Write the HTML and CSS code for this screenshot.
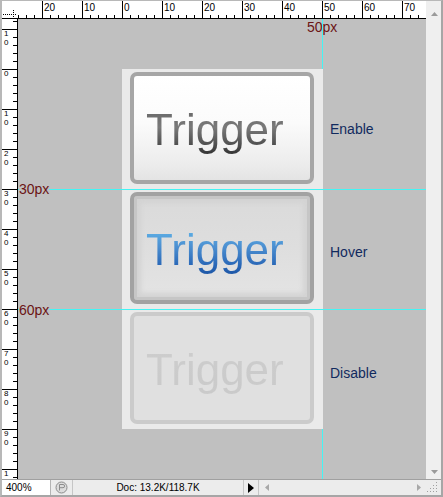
FILE: index.html
```html
<!DOCTYPE html>
<html>
<head>
<meta charset="utf-8">
<title>Sprite</title>
<link rel="stylesheet" href="styles.css">
</head>
<body>
<div class="win">
  <div class="corner">
    <svg width="16" height="17" viewBox="0 0 16 17"><path d="M1 13.5H15M11.5 9V17" stroke="#000" stroke-width="1" stroke-dasharray="1 1" fill="none"/></svg>
  </div>
  <div class="hruler">
    <span>20</span><span>10</span><span>0</span><span>10</span><span>20</span><span>30</span><span>40</span><span>50</span><span>60</span><span>70</span>
  </div>
  <div class="vscroll">
    <svg width="7" height="4" viewBox="0 0 7 4"><polygon points="0,4 7,4 3.5,0" fill="#9a9a9a"/></svg>
    <svg width="7" height="4" viewBox="0 0 7 4"><polygon points="0,0 7,0 3.5,4" fill="#9a9a9a"/></svg>
  </div>
  <div class="vruler">
    <span>1<br>0</span><span>0</span><span>1<br>0</span><span>2<br>0</span><span>3<br>0</span><span>4<br>0</span><span>5<br>0</span><span>6<br>0</span><span>7<br>0</span><span>8<br>0</span><span>9<br>0</span><span>1</span>
  </div>
  <div class="canvas">
    <span class="gl gl-50">50px</span>
    <div class="guide guide-v"></div>
    <div class="stage">
      <div class="sprite">
        <div class="cell"><div class="btn btn-enable"><span class="txt">Trigger</span></div></div>
        <div class="cell"><div class="btn btn-hover"><span class="txt">Trigger</span></div></div>
        <div class="cell"><div class="btn btn-disable"><span class="txt">Trigger</span></div></div>
      </div>
      <div class="states">
        <div class="state s-enable">Enable</div>
        <div class="state s-hover">Hover</div>
        <div class="state s-disable">Disable</div>
      </div>
    </div>
    <div class="guide guide-h g-30"></div>
    <div class="guide guide-h g-60"></div>
    <span class="gl gl-30">30px</span>
    <span class="gl gl-60">60px</span>
  </div>
  <div class="status">
    <div class="zoomf">400%</div>
    <div class="sicon">
      <svg width="13" height="13" viewBox="0 0 13 13"><circle cx="6.5" cy="6.5" r="5.5" fill="#dcdcdc" stroke="#8c8c8c"/><path d="M4.5 9.5V3.5H8a1.6 1.6 0 0 1 0 3.2H4.5" fill="none" stroke="#8c8c8c"/></svg>
    </div>
    <div class="doc">Doc: 13.2K/118.7K</div>
    <div class="play">
      <svg width="6" height="10" viewBox="0 0 6 10"><polygon points="0,0 6,5 0,10" fill="#000"/></svg>
    </div>
    <div class="hscroll">
      <svg width="4" height="7" viewBox="0 0 4 7"><polygon points="4,0 4,7 0,3.5" fill="#a8a8a8"/></svg>
      <svg width="4" height="7" viewBox="0 0 4 7"><polygon points="0,0 0,7 4,3.5" fill="#a8a8a8"/></svg>
    </div>
    <div class="grip">
      <svg width="12" height="11" viewBox="0 0 12 11" fill="#a0a0a0">
        <rect x="9" y="0" width="1" height="1"/><rect x="9" y="3" width="1" height="1"/><rect x="6" y="3" width="1" height="1"/>
        <rect x="9" y="6" width="1" height="1"/><rect x="6" y="6" width="1" height="1"/><rect x="3" y="6" width="1" height="1"/>
        <rect x="9" y="9" width="1" height="1"/><rect x="6" y="9" width="1" height="1"/><rect x="3" y="9" width="1" height="1"/><rect x="0" y="9" width="1" height="1"/>
      </svg>
    </div>
  </div>
</div>
</body>
</html>
```

FILE: styles.css
```css
* { box-sizing: border-box; margin: 0; padding: 0; }
html, body { width: 443px; height: 497px; overflow: hidden; }
body { background: #d6d6d6; font-family: "Liberation Sans", Arial, sans-serif; }

.win {
  width: 443px;
  height: 497px;
  display: grid;
  grid-template-columns: 16px 408px 15px;
  grid-template-rows: 18px 460px 16px;
  border-style: solid;
  border-color: #b8b8b8 #a6a6a6 #a6a6a6 #b8b8b8;
  border-width: 1px 2px 2px 2px;
  background: #fff;
}

/* rulers */
.corner {
  grid-row: 1;
  grid-column: 1;
  background: #fff;
  border-bottom: 1px solid #000;
}
.corner svg { display: block; }

.hruler {
  grid-row: 1;
  grid-column: 2;
  border-bottom: 1px solid #000;
  background:
    linear-gradient(to right, #000 1px, transparent 1px) 24px 0 / 40px 100% repeat-x,
    linear-gradient(to right, #000 1px, transparent 1px) 0 100% / 8px 3px repeat-x,
    #fff;
  display: flex;
  padding: 1px 0 0 26px;
  font-size: 10px;
  line-height: 12px;
  color: #000;
  overflow: hidden;
}
.hruler span { flex: 0 0 40px; }

.vruler {
  grid-row: 2;
  grid-column: 1;
  border-right: 1px solid #000;
  background:
    linear-gradient(to bottom, #000 1px, transparent 1px) 0 10px / 100% 40px repeat-y,
    linear-gradient(to bottom, #000 1px, transparent 1px) 100% 2px / 4px 8px repeat-y,
    #fff;
  display: flex;
  flex-direction: column;
  padding: 10px 0 0 2px;
  font-size: 8px;
  line-height: 9px;
  color: #000;
  overflow: hidden;
}
.vruler span { flex: 0 0 40px; }

/* scrollbar */
.vscroll {
  grid-row: 1 / span 2;
  grid-column: 3;
  background: #efefef;
  display: flex;
  flex-direction: column;
  justify-content: space-between;
  padding: 11px 0 5px 5px;
}
.vscroll svg { display: block; }

/* canvas */
.canvas {
  grid-row: 2;
  grid-column: 2;
  position: relative;
  overflow: hidden;
  background: #c0c0c0;
}

.guide { position: absolute; background: #45f4f4; }
.guide-v { left: 304px; top: 0; width: 1px; height: 100%; }
.guide-h { left: 0; width: 100%; height: 1px; }
.g-30 { top: 170px; }
.g-60 { top: 290px; }

.gl {
  position: absolute;
  font-size: 14px;
  line-height: 16px;
  color: #6b1414;
}
.gl-50 { left: 289px; top: 0; }
.gl-30 { left: 1px; top: 162px; background: #c0c0c0; }
.gl-60 { left: 1px; top: 283px; background: #c0c0c0; }

.stage {
  position: absolute;
  left: 104px;
  top: 50px;
  display: flex;
}

.sprite {
  width: 201px;
  background: #eaeaea;
  display: flex;
  flex-direction: column;
}
.cell {
  height: 120px;
  padding: 3px 0 0 8px;
}

.btn {
  width: 184px;
  height: 112px;
  border: 4px solid #a6a6a6;
  border-radius: 7px;
  padding: 28px 0 0 12px;
}
.btn-enable {
  background: linear-gradient(to bottom, #ffffff 0%, #fbfbfb 45%, #ececec 85%, #e4e4e4 100%);
}
.btn-hover {
  border-color: #a2a2a2;
  background: linear-gradient(to bottom, #dadada 0%, #dedede 50%, #e4e4e4 100%);
  box-shadow: inset 0 0 0 3px #c6c6c6, inset 0 0 5px 7px #d3d3d3;
}
.btn-disable {
  border-color: #cbcbcb;
  background: #e0e0e0;
}

.txt {
  display: inline-block;
  font-family: "Liberation Sans", Arial, sans-serif;
  font-size: 44px;
  line-height: 52px;
  -webkit-background-clip: text;
  background-clip: text;
  color: transparent;
}
.btn-enable .txt {
  background-image: linear-gradient(to bottom, #6c6c6c 18%, #7a7a7a 45%, #505050 78%, #2e2e2e 100%);
}
.btn-hover .txt {
  background-image: linear-gradient(to bottom, #5aaae2 18%, #4b8ed0 45%, #2b69b8 78%, #1a53a3 100%);
}
.btn-disable .txt {
  background-image: linear-gradient(to bottom, #cdcdcd 0%, #cacaca 100%);
}

.states {
  margin-left: 7px;
  display: flex;
  flex-direction: column;
}
.state {
  height: 120px;
  font-size: 14px;
  line-height: 16px;
  color: #112a5e;
}
.s-enable { padding-top: 52px; }
.s-hover { padding-top: 55px; }
.s-disable { padding-top: 56px; }

/* status bar */
.status {
  grid-row: 3;
  grid-column: 1 / span 3;
  display: flex;
  background: #ececec;
  border-top: 1px solid #a0a0a0;
  font-size: 10px;
  line-height: 15px;
  color: #000;
}
.zoomf {
  width: 49px;
  background: #fff;
  border-right: 1px solid #b4b4b4;
  padding-left: 4px;
}
.sicon {
  width: 22px;
  border-right: 1px solid #c6c6c6;
  display: flex;
  align-items: center;
  justify-content: center;
}
.doc {
  width: 171px;
  text-align: center;
  border-right: 1px solid #c6c6c6;
}
.play {
  width: 15px;
  border-right: 1px solid #c6c6c6;
  display: flex;
  align-items: center;
  justify-content: center;
}
.hscroll {
  width: 167px;
  display: flex;
  align-items: center;
  justify-content: space-between;
  padding: 0 5px 0 6px;
}
.grip {
  width: 15px;
  display: flex;
  align-items: flex-end;
  justify-content: flex-end;
  padding: 0 2px 2px 0;
}
.status svg { display: block; }
```
